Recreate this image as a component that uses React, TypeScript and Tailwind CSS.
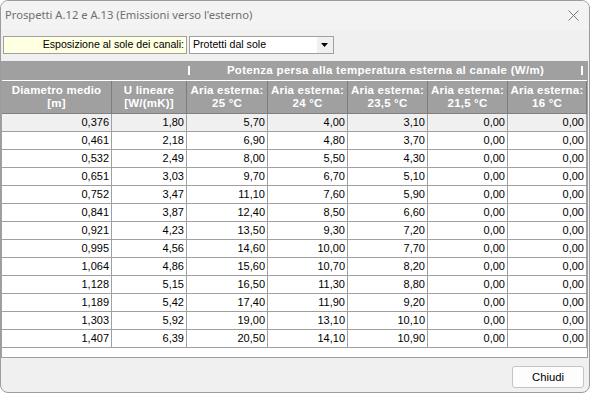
import React from "react";

const rows: string[][] = [
  ["0,376", "1,80", "5,70", "4,00", "3,10", "0,00", "0,00"],
  ["0,461", "2,18", "6,90", "4,80", "3,70", "0,00", "0,00"],
  ["0,532", "2,49", "8,00", "5,50", "4,30", "0,00", "0,00"],
  ["0,651", "3,03", "9,70", "6,70", "5,10", "0,00", "0,00"],
  ["0,752", "3,47", "11,10", "7,60", "5,90", "0,00", "0,00"],
  ["0,841", "3,87", "12,40", "8,50", "6,60", "0,00", "0,00"],
  ["0,921", "4,23", "13,50", "9,30", "7,20", "0,00", "0,00"],
  ["0,995", "4,56", "14,60", "10,00", "7,70", "0,00", "0,00"],
  ["1,064", "4,86", "15,60", "10,70", "8,20", "0,00", "0,00"],
  ["1,128", "5,15", "16,50", "11,30", "8,80", "0,00", "0,00"],
  ["1,189", "5,42", "17,40", "11,90", "9,20", "0,00", "0,00"],
  ["1,303", "5,92", "19,00", "13,10", "10,10", "0,00", "0,00"],
  ["1,407", "6,39", "20,50", "14,10", "10,90", "0,00", "0,00"],
];

const headers: [string, string][] = [
  ["Diametro medio", "[m]"],
  ["U lineare", "[W/(mK)]"],
  ["Aria esterna:", "25 °C"],
  ["Aria esterna:", "24 °C"],
  ["Aria esterna:", "23,5 °C"],
  ["Aria esterna:", "21,5 °C"],
  ["Aria esterna:", "16 °C"],
];

const cols = "grid grid-cols-[110px_75px_81px_80px_80px_80px_79px]";

export default function App() {
  return (
    <div className="w-[590px] h-[393px] bg-white">
      <div
        className="w-[590px] h-[393px] border border-[#9c9c9c] rounded-[8px] bg-[#f0f0f0] overflow-hidden flex flex-col"
        style={{ fontFamily: "'Liberation Sans', Arial, sans-serif" }}
      >
        {/* Title bar */}
        <div className="h-[29px] shrink-0 flex items-center justify-between bg-[#f3f3f3] pl-[4px] pr-[10px]">
          <span
            className="text-[11.2px] text-[#6f6f6f] leading-none -mt-[2px]"
            style={{ fontFamily: "'Noto Sans', 'Liberation Sans', sans-serif" }}
          >
            Prospetti A.12 e A.13 (Emissioni verso l'esterno)
          </span>
          <svg width="11" height="11" viewBox="0 0 11 11" className="-mt-[1px]">
            <path d="M0.5 0.5 L10.5 10.5 M10.5 0.5 L0.5 10.5" stroke="#7a7a7a" strokeWidth="1" fill="none" />
          </svg>
        </div>

        {/* Options row */}
        <div className="flex items-center gap-[2px] pl-[2px] pt-[6px] h-[24px] shrink-0">
          <div className="w-[184px] h-[18px] border border-[#a0a0a0] bg-[#ffffe1] flex items-center justify-end pr-[2px] text-[10.6px] text-black">
            Esposizione al sole dei canali:
          </div>
          <div className="w-[145px] h-[18px] border border-[#a0a0a0] bg-white flex items-center text-[10.6px] text-black">
            <span className="flex-1 pl-[3px]">Protetti dal sole</span>
            <div className="w-[16px] h-[16px] bg-[#f0f0f0] flex items-center justify-center">
              <svg width="8" height="5" viewBox="0 0 8 5">
                <path d="M0 0 L7 0 L3.5 4 Z" fill="#000" />
              </svg>
            </div>
          </div>
        </div>

        {/* Grid */}
        <div className="mt-[7px] w-[587px] h-[297px] shrink-0 border-l border-r border-b border-[#a0a0a0] bg-white flex flex-col">
          {/* header row 1 */}
          <div className="h-[20px] bg-[#a0a0a0] flex border-b border-white">
            <div className="w-[185px]" />
            <div className="flex-1 flex items-center justify-between pl-[1px] pr-[4px]">
              <div className="w-[2px] h-[9px] bg-white" />
              <span className="text-[11.5px] font-bold text-white tracking-[0.3px]">
                Potenza persa alla temperatura esterna al canale (W/m)
              </span>
              <div className="w-[2px] h-[9px] bg-white" />
            </div>
          </div>
          {/* header row 2 */}
          <div className={`${cols} h-[33px] bg-[#a0a0a0] border-b border-[#808080]`}>
            {headers.map((h, i) => (
              <div
                key={i}
                className="border-r border-[#7c7c7c] flex flex-col items-center justify-center text-white font-bold text-[11.5px] leading-[13px] tracking-[0.2px]"
              >
                <span>{h[0]}</span>
                <span>{h[1]}</span>
              </div>
            ))}
          </div>
          {/* data */}
          {rows.map((r, ri) => (
            <div key={ri} className={`${cols} h-[18px] ${ri === 0 ? "bg-[#f0f0f0]" : "bg-white"}`}>
              {r.map((v, ci) => (
                <div
                  key={ci}
                  className="border-r border-b border-[#a0a0a0] flex items-center justify-end pr-[2px] text-[11px] text-black leading-none"
                >
                  {v}
                </div>
              ))}
            </div>
          ))}
        </div>

        {/* Footer */}
        <div className="flex-1 flex justify-end items-start pt-[8px] pr-[5px]">
          <button className="w-[72px] h-[22px] rounded-[3px] border border-[#c4c4c4] bg-[#fdfdfd] text-[11.3px] text-black flex items-center justify-center">
            Chiudi
          </button>
        </div>
      </div>
    </div>
  );
}
